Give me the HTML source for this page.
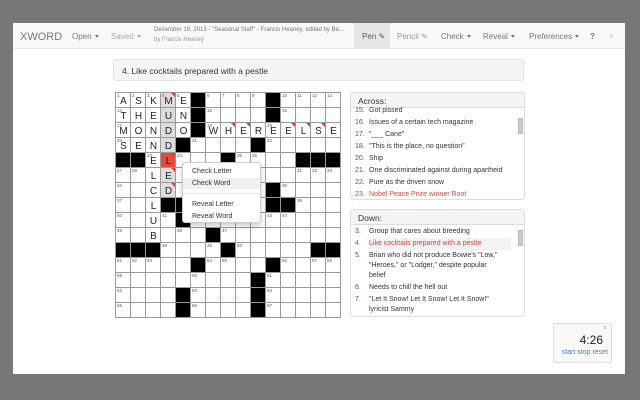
<!DOCTYPE html><html><head><meta charset="utf-8"><style>
*{box-sizing:border-box;margin:0;padding:0}
body{width:640px;height:400px;background:#777;font-family:"Liberation Sans",sans-serif;position:relative;overflow:hidden;color:#333}
#p{position:absolute;left:13px;top:23px;width:612px;height:351px;background:#fff}
#hd{position:absolute;left:0;top:0;width:612px;height:26px;background:#f8f8f8;border-bottom:1px solid #e7e7e7;font-size:8px;color:#777}
#hd span{position:absolute;top:9px;white-space:nowrap}
.car{display:inline-block;border-top:3px solid #777;border-left:2px solid transparent;border-right:2px solid transparent;vertical-align:middle;margin-left:3px}
#bar{position:absolute;left:100px;top:36px;width:411px;height:22px;background:#f5f5f5;border:1px solid #e3e3e3;border-radius:3px;font-size:8.5px;padding:6px 8px;color:#333}
#g{position:absolute;left:115px;top:92px;width:226px;height:226px;border:1px solid #999}
.c{position:absolute;width:15px;height:15px;border-right:1px solid #999;border-bottom:1px solid #999;background:#fff}
.c.b{background:#000}
.c.h{background:#ddd}
.c.s{background:#e8473c}
.n{position:absolute;left:1px;top:0;font-size:4.5px;color:#555;line-height:5px}
.l{position:absolute;left:0;width:15px;top:3px;text-align:center;font-size:10px;color:#222;line-height:12px}
.t{position:absolute;right:0;top:0;border-top:4px solid #e33;border-left:4px solid transparent}
#m{position:absolute;left:182px;top:162px;width:79px;height:61px;background:#fff;border:1px solid #ccc;border-radius:3px;box-shadow:0 3px 6px rgba(0,0,0,.2);font-size:7px;color:#333}
#m div{position:absolute;left:0;width:77px;padding-left:9px;height:11px;line-height:11px}
.box{position:absolute;left:350px;width:175px;border:1px solid #ddd;border-radius:3px;background:#fff;overflow:hidden}
.box .hh{height:15px;background:#f5f5f5;border-bottom:1px solid #ddd;font-size:8.5px;padding:3px 7px;color:#333}
.cl{position:absolute;left:4px;font-size:7px;color:#333;line-height:10px;white-space:nowrap}
.cl b{font-weight:normal;display:inline-block;width:14px;color:#555}
.sb{position:absolute;left:167px;width:5px;height:16px;background:#ccc;border:1px solid #bbb}
#tm{position:absolute;left:553px;top:323px;width:59px;height:40px;background:#f8f8f8;border:1px solid #ddd;border-radius:2px}
</style></head><body>
<div id="p">
<div id="hd">
<span style="left:7px;top:8px;font-size:11px;color:#777">XWORD</span>
<span style="left:59px">Open<i class="car"></i></span>
<span style="left:98px;color:#aaa">Saved<i class="car" style="border-top-color:#aaa"></i></span>
<span style="left:141px;top:4px;font-size:6px;color:#777">December 18, 2013 - "Seasonal Staff" - Francis Heaney, edited by Be...</span>
<span style="left:141px;top:14px;font-size:6px;color:#999">by Francis Heaney</span>
<div style="position:absolute;left:341px;top:0;width:36px;height:26px;background:#e7e7e7"></div>
<span style="left:349px;color:#555">Pen ✎</span>
<span style="left:384px;color:#999">Pencil ✎</span>
<span style="left:428px">Check<i class="car"></i></span>
<span style="left:470px">Reveal<i class="car"></i></span>
<span style="left:516px">Preferences<i class="car"></i></span>
<span style="left:577px;font-weight:bold;color:#777">?</span>
<span style="left:596px;color:#ccc">×</span>
</div>
<div id="bar">4. Like cocktails prepared with a pestle</div>
</div>
<div id="g"></div>
<div id="m">
<div style="top:3px">Check Letter</div>
<div style="top:15px;background:#f0f0f0">Check Word</div>
<div style="top:30px;height:1px;background:#e5e5e5;padding:0"></div>
<div style="top:36px">Reveal Letter</div>
<div style="top:48px">Reveal Word</div>
</div>
<div class="box" style="top:92px;height:108px"><div class="hh">Across:</div>
<div class="cl" style="top:13px"><b>15.</b>Got pissed</div>
<div class="cl" style="top:25px"><b>16.</b>Issues of a certain tech magazine</div>
<div class="cl" style="top:37px"><b>17.</b>"___ Cane"</div>
<div class="cl" style="top:49px"><b>18.</b>"This is the place, no question"</div>
<div class="cl" style="top:61px"><b>20.</b>Ship</div>
<div class="cl" style="top:73px"><b>21.</b>One discriminated against during apartheid</div>
<div class="cl" style="top:85px"><b>22.</b>Pure as the driven snow</div>
<div class="cl" style="top:97px;color:#c44"><b style="color:#c44">23.</b>Nobel Peace Prize winner Root</div>
<div class="sb" style="top:25px"></div>
</div>
<div class="box" style="top:209px;height:108px"><div class="hh">Down:</div>
<div class="cl" style="top:17px"><b>3.</b>Group that cares about breeding</div>
<div style="position:absolute;left:18px;top:28px;width:142px;height:12px;background:#f3f3f3"></div>
<div class="cl" style="top:29px;color:#c44"><b style="color:#c44">4.</b>Like cocktails prepared with a pestle</div>
<div class="cl" style="top:41px"><b>5.</b>Brian who did not produce Bowie's "Low,"</div>
<div class="cl" style="top:51px"><b></b>"Heroes," or "Lodger," despite popular</div>
<div class="cl" style="top:61px"><b></b>belief</div>
<div class="cl" style="top:73px"><b>6.</b>Needs to chill the hell out</div>
<div class="cl" style="top:85px"><b>7.</b>"Let It Snow! Let It Snow! Let It Snow!"</div>
<div class="cl" style="top:95px"><b></b>lyricist Sammy</div>
<div class="sb" style="top:20px"></div>
</div>
<div id="tm">
<div style="position:absolute;right:4px;top:1px;font-size:7px;color:#aaa">×</div>
<div style="position:absolute;right:8px;top:9px;font-size:12px;color:#222">4:26</div>
<div style="position:absolute;right:3px;top:25px;font-size:7px;color:#4a7fc1">start stop reset</div>
</div>
<script>
var B={0:[5,10],1:[5,10],2:[5],3:[4,9],4:[0,1,7,12,13,14],5:[8],6:[10],7:[3,4,10,11],8:[4],9:[6],10:[0,1,2,7,13,14],11:[5,10],12:[9],13:[4,9],14:[4,9]};
var L={};
function put(r,c,s){for(var i=0;i<s.length;i++)if(s[i]!=' ')L[r+','+(c+i)]=s[i];}
put(0,0,'ASKME');put(1,0,'THEUN');put(2,0,'MONDO');put(2,6,'WHEREELSE');put(3,0,'SEND');
var dc='ELCLUB';for(var i=0;i<6;i++)L[(4+i)+',2']=dc[i];
L['4,3']='L';L['5,3']='E';L['6,3']='D';
var T={'0,3':1,'2,7':1,'2,8':1,'2,11':1,'2,12':1,'2,13':1,'4,3':1,'5,3':1,'6,3':1};
function bl(r,c){return r<0||c<0||r>14||c>14||(B[r]&&B[r].indexOf(c)>=0);}
var g=document.getElementById('g'),h='',n=1;
for(var r=0;r<15;r++)for(var c=0;c<15;c++){
var k=r+','+c,cls='c';
if(bl(r,c))cls+=' b';else if(r==4&&c==3)cls+=' s';else if(c==3&&r<7)cls+=' h';
h+='<div class="'+cls+'" style="left:'+(c*15)+'px;top:'+(r*15)+'px">';
if(!bl(r,c)){var st=(bl(r,c-1)&&!bl(r,c+1))||(bl(r-1,c)&&!bl(r+1,c));if(st){h+='<span class="n">'+n+'</span>';n++;}
if(L[k])h+='<span class="l">'+L[k]+'</span>';if(T[k])h+='<i class="t"></i>';}
h+='</div>';}
g.innerHTML=h;
</script>
</body></html>
